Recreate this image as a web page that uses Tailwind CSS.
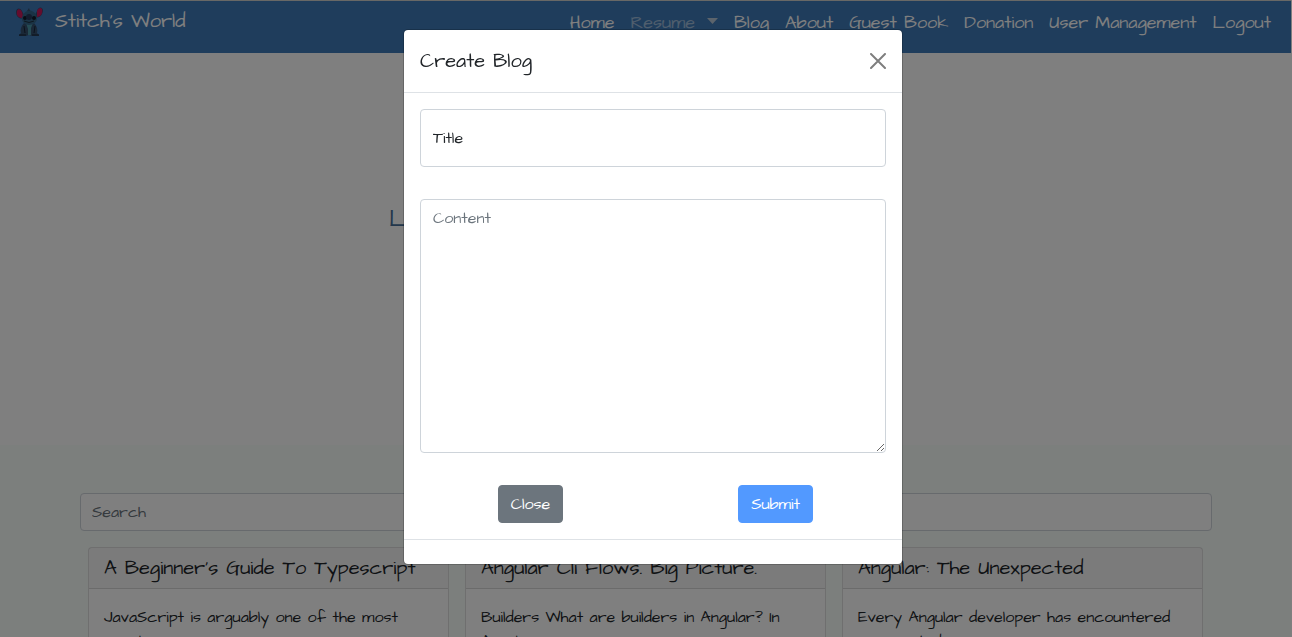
<!DOCTYPE html>
<html lang="en">
<head>
<meta charset="utf-8">
<meta name="viewport" content="width=device-width, initial-scale=1">
<title>Stitch's World</title>
<script src="https://cdn.jsdelivr.net/npm/@tailwindcss/browser@4"></script>
</head>
<body class="h-screen overflow-hidden bg-white font-['Architects_Daughter','Open_Sans',sans-serif] text-base text-[#212529]">

<header class="mr-px flex h-[53px] items-start justify-between border-t border-[#d0d0cc] bg-[#3e7ab8] pr-5 pl-[15px] text-white">
  <a href="#" class="flex items-center gap-3 pt-1 text-xl leading-8">
    <svg class="h-8 w-7" viewBox="0 0 28 32" aria-hidden="true">
      <path d="M9 13C4 15 1 11 1 7c0-4 4-5 6-1l2 4z" fill="#314e70"/>
      <path d="M7 13C3 13 1 10 2 6c1-3 4-2 5 1l1 4z" fill="#c81a5c"/>
      <path d="M20 12c5 2 8-3 8-7-1-4-5-3-6 1l-2 4z" fill="#314e70"/>
      <path d="M22 12c4 0 6-4 5-8-1-2-4-1-5 2z" fill="#c81a5c"/>
      <path d="M9 18c-3 3-4 7-3 10l-2 2v1h7l3-1 3 1h7v-1l-2-2c1-3 0-7-3-10z" fill="#34506f"/>
      <path d="M11 18h7l-2 5v7h-3v-6z" fill="#4a97a8"/>
      <path d="M7 14c0-5 3-7 7-9 5 1 8 4 8 9 0 3-4 6-8 6s-7-3-7-6z" fill="#35668a"/>
      <path d="M12 6l2-3 1 3z" fill="#34506f"/>
      <ellipse cx="10" cy="13" rx="2" ry="2" fill="#101a28"/>
      <ellipse cx="19" cy="13" rx="2" ry="2" fill="#101a28"/>
      <ellipse cx="14" cy="12" rx="3" ry="3" fill="#26385a"/>
      <path d="M9 16q5 3 10 0" fill="none" stroke="#1c3040"/>
      <path d="M4 30h7M17 30h7M9 21l1 7M20 21l-1 7" stroke="#182438" fill="none"/>
    </svg>
    Stitch's World
  </a>
  <nav class="pt-2 text-lg leading-7">
    <ul class="flex gap-4 whitespace-nowrap">
      <li><a href="#">Home</a></li>
      <li><a href="#" class="flex items-center gap-3 text-white/50">Resume
        <svg class="mb-1 h-[6px] w-[11px]" viewBox="0 0 11 6" aria-hidden="true"><path d="M0 0h11L5.500 6z" fill="#b8c8d8"/></svg></a></li>
      <li><a href="#">Blog</a></li>
      <li><a href="#">About</a></li>
      <li><a href="#">Guest Book</a></li>
      <li><a href="#">Donation</a></li>
      <li><a href="#">User Management</a></li>
      <li><a href="#">Logout</a></li>
    </ul>
  </nav>
</header>

<section class="flex h-[392px] justify-center pt-[148px]">
  <h1 class="w-[514px] text-2xl leading-9 text-[#466e98]">L</h1>
</section>

<main class="mr-px bg-[#f8fefb] pr-[79px] pl-20 pt-12 pb-12">
  <input type="search" aria-label="Search" placeholder="Search" class="block h-[38px] w-full rounded border border-[#ced4da] bg-white px-[11px] placeholder:text-[#6c757d]">
  <div class="mt-4 mr-px grid grid-cols-3">
    <article class="px-2"><div class="rounded border border-black/13 bg-white">
      <h2 class="h-[41px] truncate border-b border-black/13 bg-black/3 px-[15px] text-xl leading-10">A Beginner's Guide To Typescript</h2>
      <p class="px-[15px] py-4 leading-6">JavaScript is arguably one of the most<br>popular</p>
    </div></article>
    <article class="px-2"><div class="rounded border border-black/13 bg-white">
      <h2 class="h-[41px] truncate border-b border-black/13 bg-black/3 px-[15px] text-xl leading-10">Angular Cli Flows. Big Picture.</h2>
      <p class="px-[15px] py-4 leading-6">Builders What are builders in Angular? In<br>Angular</p>
    </div></article>
    <article class="px-2"><div class="rounded border border-black/13 bg-white">
      <h2 class="h-[41px] truncate border-b border-black/13 bg-black/3 px-[15px] text-xl leading-10">Angular: The Unexpected</h2>
      <p class="px-[15px] py-4 leading-6">Every Angular developer has encountered<br>unexpected</p>
    </div></article>
  </div>
</main>

<div class="fixed inset-0 bg-black/50"></div>
<div class="fixed inset-0 flex items-start justify-center pt-[29px] pl-[14px]" role="dialog" aria-modal="true" aria-labelledby="dialog-title">
  <form class="w-full max-w-[500px] rounded-[5px] border border-black/20 bg-white bg-clip-padding">
    <div class="flex items-center justify-between border-b border-[#dee2e6] p-4">
      <h2 id="dialog-title" class="text-xl leading-[30px]">Create Blog</h2>
      <button type="button" aria-label="Close" class="opacity-50">
        <svg class="h-4 w-4" viewBox="0 0 16 16" aria-hidden="true"><path d="M1 1l14 14M15 1L1 15" stroke="#000" stroke-width="2" stroke-linecap="round"/></svg>
      </button>
    </div>
    <div class="flex flex-col gap-8 p-4">
      <div class="relative">
        <input id="title" type="text" class="block h-[58px] w-full rounded border border-[#ced4da] px-3">
        <label for="title" class="pointer-events-none absolute inset-y-0 left-0 flex items-center border border-transparent px-3">Title</label>
      </div>
      <textarea aria-label="Content" placeholder="Content" class="block h-[254px] w-full resize rounded border border-[#ced4da] px-3 py-[6px] leading-6 placeholder:text-[#6c757d]"></textarea>
      <div class="grid grid-cols-2 justify-items-center text-white">
        <button type="button" class="mr-3 h-[38px] rounded border border-[#6c757d] bg-[#6c757d] px-3">Close</button>
        <button type="submit" class="ml-3 h-[38px] rounded border border-[#5299ff] bg-[#5299ff] px-3">Submit</button>
      </div>
    </div>
    <div class="h-[25px] border-t border-[#dee2e6]"></div>
  </form>
</div>
</body>
</html>
